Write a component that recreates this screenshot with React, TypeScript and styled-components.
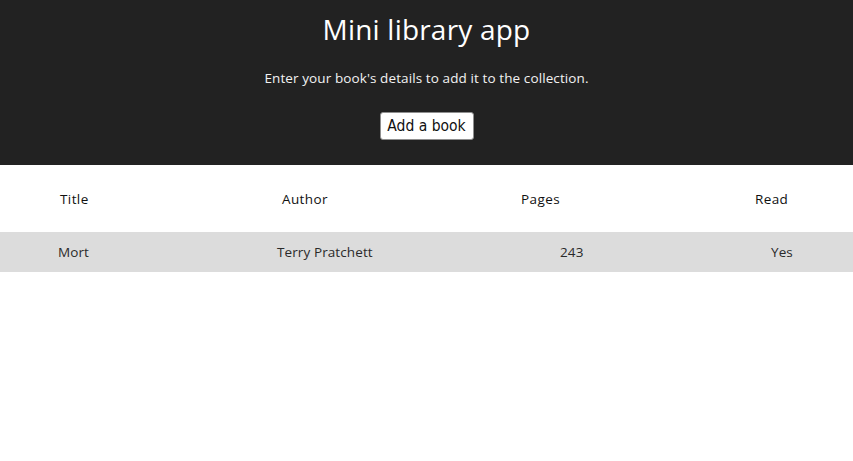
import React from "react";
import styled, { createGlobalStyle } from "styled-components";

const GlobalStyle = createGlobalStyle`
  html, body { margin: 0; padding: 0; background: #ffffff; }
  body { font-family: "Open Sans", "Liberation Sans", sans-serif; }
`;

const Header = styled.header`
  background: #222222;
  height: 165px;
  box-sizing: border-box;
  padding-top: 11px;
  display: flex;
  flex-direction: column;
  align-items: center;
  color: #ffffff;
`;

const Title = styled.h1`
  margin: 0;
  font-family: "Open Sans", sans-serif;
  font-weight: 400;
  font-size: 28px;
  line-height: 36px;
  letter-spacing: 0.2px;
`;

const Subtitle = styled.p`
  margin: 22px 0 0;
  font-family: "Open Sans", sans-serif;
  font-size: 13.5px;
  line-height: 18px;
  letter-spacing: 0.1px;
  color: #f2f2f2;
`;

const AddButton = styled.button`
  margin-top: 25px;
  height: 28px;
  width: 94px;
  padding: 0;
  background: #ffffff;
  color: #111111;
  border: 1px solid #8f8f8f;
  border-radius: 3px;
  font-family: "DejaVu Sans Condensed", "DejaVu Sans", sans-serif;
  font-size: 15.5px;
  cursor: pointer;
`;

const Row = styled.div<{ $cols: string; $pad: number; $height: number; $bg: string; $color: string; $spacing: number }>`
  display: grid;
  grid-template-columns: ${(p) => p.$cols};
  padding-left: ${(p) => p.$pad}px;
  height: ${(p) => p.$height}px;
  align-items: center;
  background: ${(p) => p.$bg};
  color: ${(p) => p.$color};
  font-family: "Open Sans", sans-serif;
  font-size: 13.5px;
  letter-spacing: ${(p) => p.$spacing}px;
`;

const Cell = styled.span`
  white-space: nowrap;
`;

const HeadCell = styled(Cell)`
  font-weight: 500;
`;

const headers = ["Title", "Author", "Pages", "Read"];
const books = [{ title: "Mort", author: "Terry Pratchett", pages: 243, read: "Yes" }];

export default function App() {
  return (
    <>
      <GlobalStyle />
      <Header>
        <Title>Mini library app</Title>
        <Subtitle>Enter your book's details to add it to the collection.</Subtitle>
        <AddButton>Add a book</AddButton>
      </Header>
      <Row $cols="222px 239px 234px auto" $pad={60} $height={67} $bg="#ffffff" $color="#111111" $spacing={0.4}>
        {headers.map((h) => (
          <HeadCell key={h}>{h}</HeadCell>
        ))}
      </Row>
      {books.map((b) => (
        <Row
          key={b.title}
          $cols="219px 283px 211px auto"
          $pad={58}
          $height={40}
          $bg="#dcdcdc"
          $color="#2a2a2a"
          $spacing={0.1}
        >
          <Cell>{b.title}</Cell>
          <Cell>{b.author}</Cell>
          <Cell>{b.pages}</Cell>
          <Cell>{b.read}</Cell>
        </Row>
      ))}
    </>
  );
}
